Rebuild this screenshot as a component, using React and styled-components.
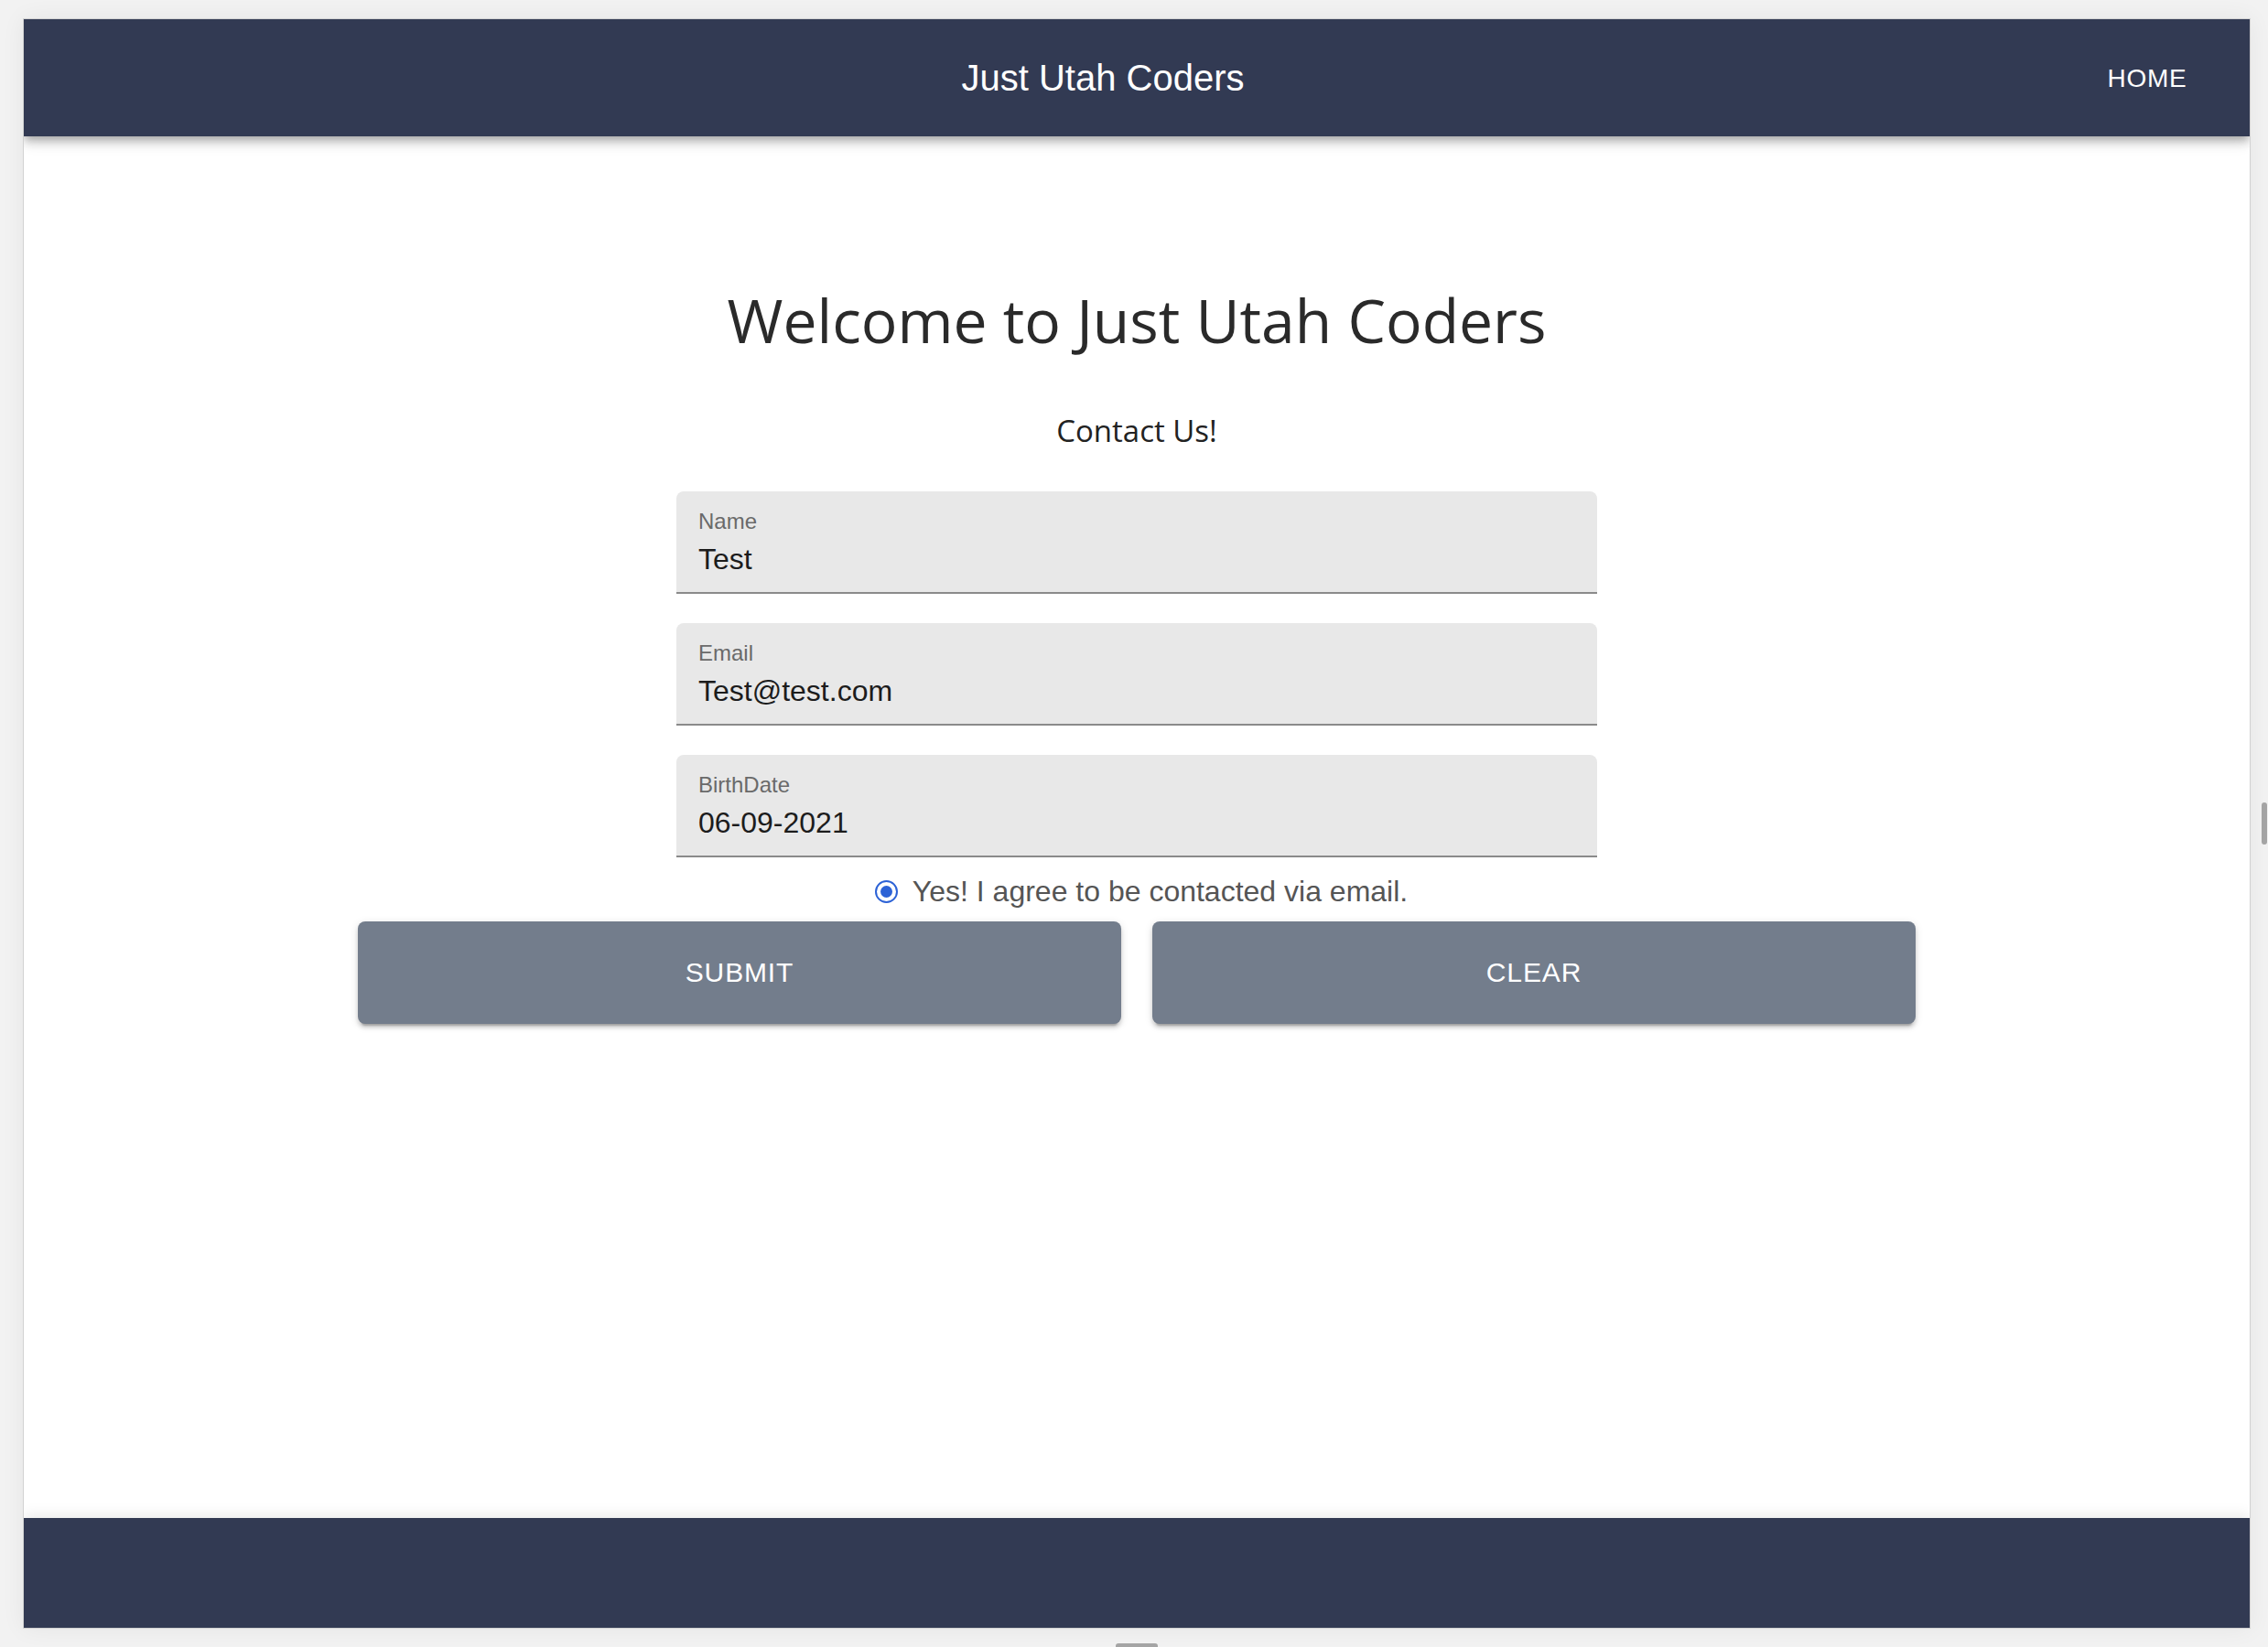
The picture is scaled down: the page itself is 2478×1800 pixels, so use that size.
import React, { useState } from "react";
import styled, { createGlobalStyle } from "styled-components";

const GlobalStyle = createGlobalStyle`
  html, body {
    margin: 0;
    padding: 0;
    background: #f2f2f2;
    overflow: hidden;
  }
  * {
    box-sizing: border-box;
  }
`;

const fields = [
  { label: "Name", value: "Test" },
  { label: "Email", value: "Test@test.com" },
  { label: "BirthDate", value: "06-09-2021" },
];

export default function App() {
  const [agree, setAgree] = useState(true);

  return (
    <>
      <GlobalStyle />
      <Stage>
        <Frame>
          <Header>
            <Brand>Just Utah Coders</Brand>
            <NavButton>Home</NavButton>
          </Header>

          <Main>
            <Heading>Welcome to Just Utah Coders</Heading>
            <SubHeading>Contact Us!</SubHeading>

            <Form>
              {fields.map((f) => (
                <Field key={f.label}>
                  <FieldLabel>{f.label}</FieldLabel>
                  <FieldValue>{f.value}</FieldValue>
                </Field>
              ))}
            </Form>

            <Consent onClick={() => setAgree((a) => !a)}>
              <Radio checked={agree} />
              <ConsentText>Yes! I agree to be contacted via email.</ConsentText>
            </Consent>

            <Buttons>
              <ActionButton>Submit</ActionButton>
              <ActionButton>Clear</ActionButton>
            </Buttons>
          </Main>

          <Footer />
        </Frame>

        <SideGutter>
          <SideHandle />
        </SideGutter>
        <BottomGutter>
          <BottomHandle />
        </BottomGutter>
      </Stage>
    </>
  );
}

const Stage = styled.div`
  display: grid;
  grid-template-columns: 2434px 1fr;
  grid-template-rows: 1760px 1fr;
  width: 2478px;
  height: 1800px;
  padding: 20px 0 0 25px;
`;

const Frame = styled.div`
  display: flex;
  flex-direction: column;
  background: #ffffff;
  border: 1px solid #d2d2d2;
  box-shadow: 0 0 24px rgba(0, 0, 0, 0.06);
  overflow: hidden;
`;

const Header = styled.header`
  position: relative;
  z-index: 1;
  flex: none;
  height: 128px;
  display: flex;
  align-items: center;
  padding: 0 48px;
  background: #323a53;
  color: #ffffff;
  box-shadow: 0 4px 8px -2px rgba(0, 0, 0, 0.2), 0 8px 10px 0 rgba(0, 0, 0, 0.14),
    0 2px 20px 0 rgba(0, 0, 0, 0.12);
`;

const Brand = styled.div`
  flex: 1;
  padding-left: 54px;
  text-align: center;
  font-family: "Liberation Sans", Arial, sans-serif;
  font-size: 40px;
  line-height: 1.6;
`;

const NavButton = styled.button`
  min-width: 128px;
  padding: 12px 16px;
  border: none;
  background: transparent;
  color: #ffffff;
  font-family: "Liberation Sans", Arial, sans-serif;
  font-size: 28px;
  letter-spacing: 0.8px;
  text-transform: uppercase;
  line-height: 1.75;
  cursor: pointer;
`;

const Main = styled.main`
  flex: 1;
  display: flex;
  flex-direction: column;
  align-items: center;
`;

const Heading = styled.h1`
  margin: 161px 0 0;
  font-family: "Open Sans", sans-serif;
  font-weight: 400;
  font-size: 66px;
  line-height: 79px;
  color: #2a2a2a;
`;

const SubHeading = styled.p`
  margin: 57px 0 0;
  font-family: "Open Sans", sans-serif;
  font-size: 33px;
  line-height: 50px;
  color: #222222;
`;

const Form = styled.div`
  width: 1006px;
  margin-top: 41px;
  display: flex;
  flex-direction: column;
  gap: 32px;
`;

const Field = styled.div`
  height: 112px;
  display: flex;
  flex-direction: column;
  padding: 21px 24px 0;
  background: #e8e8e8;
  border-radius: 8px 8px 0 0;
  border-bottom: 2px solid #8a8a8a;
  font-family: "Liberation Sans", Arial, sans-serif;
`;

const FieldLabel = styled.span`
  font-size: 24px;
  line-height: 24px;
  color: #6a6a6a;
`;

const FieldValue = styled.span`
  margin-top: 13px;
  font-size: 32px;
  line-height: 32px;
  color: #1c1c1c;
`;

const Consent = styled.label`
  margin-top: 13px;
  height: 48px;
  display: flex;
  align-items: center;
  gap: 16px;
  padding-left: 10px;
  cursor: pointer;
`;

const Radio = styled.span`
  width: 25px;
  height: 25px;
  border-radius: 50%;
  border: 2px solid #2c62d6;
  background: #ffffff;
  display: flex;
  align-items: center;
  justify-content: center;
  &::after {
    content: "";
    width: 13px;
    height: 13px;
    border-radius: 50%;
    background: ${(p) => (p.checked ? "#2c62d6" : "transparent")};
  }
`;

const ConsentText = styled.span`
  font-family: "Liberation Sans", Arial, sans-serif;
  font-size: 32px;
  color: #555555;
`;

const Buttons = styled.div`
  width: 1702px;
  margin-top: 9px;
  display: grid;
  grid-template-columns: 1fr 1fr;
  gap: 34px;
`;

const ActionButton = styled.button`
  height: 112px;
  border: none;
  border-radius: 8px;
  background: #737d8c;
  color: #ffffff;
  font-family: "Liberation Sans", Arial, sans-serif;
  font-size: 30px;
  letter-spacing: 0.86px;
  text-transform: uppercase;
  box-shadow: 0 6px 2px -4px rgba(0, 0, 0, 0.2), 0 4px 4px 0 rgba(0, 0, 0, 0.14),
    0 2px 10px 0 rgba(0, 0, 0, 0.12);
  cursor: pointer;
`;

const Footer = styled.footer`
  position: relative;
  flex: none;
  height: 120px;
  background: #323a53;
  box-shadow: 0 -4px 14px rgba(0, 0, 0, 0.08);
`;

const SideGutter = styled.div`
  display: flex;
  align-items: center;
  padding-left: 12px;
`;

const SideHandle = styled.div`
  width: 6px;
  height: 46px;
  border-radius: 3px;
  background: #a4a4a4;
`;

const BottomGutter = styled.div`
  display: flex;
  justify-content: center;
  align-items: flex-end;
`;

const BottomHandle = styled.div`
  width: 46px;
  height: 4px;
  border-radius: 3px 3px 0 0;
  background: #a4a4a4;
`;
